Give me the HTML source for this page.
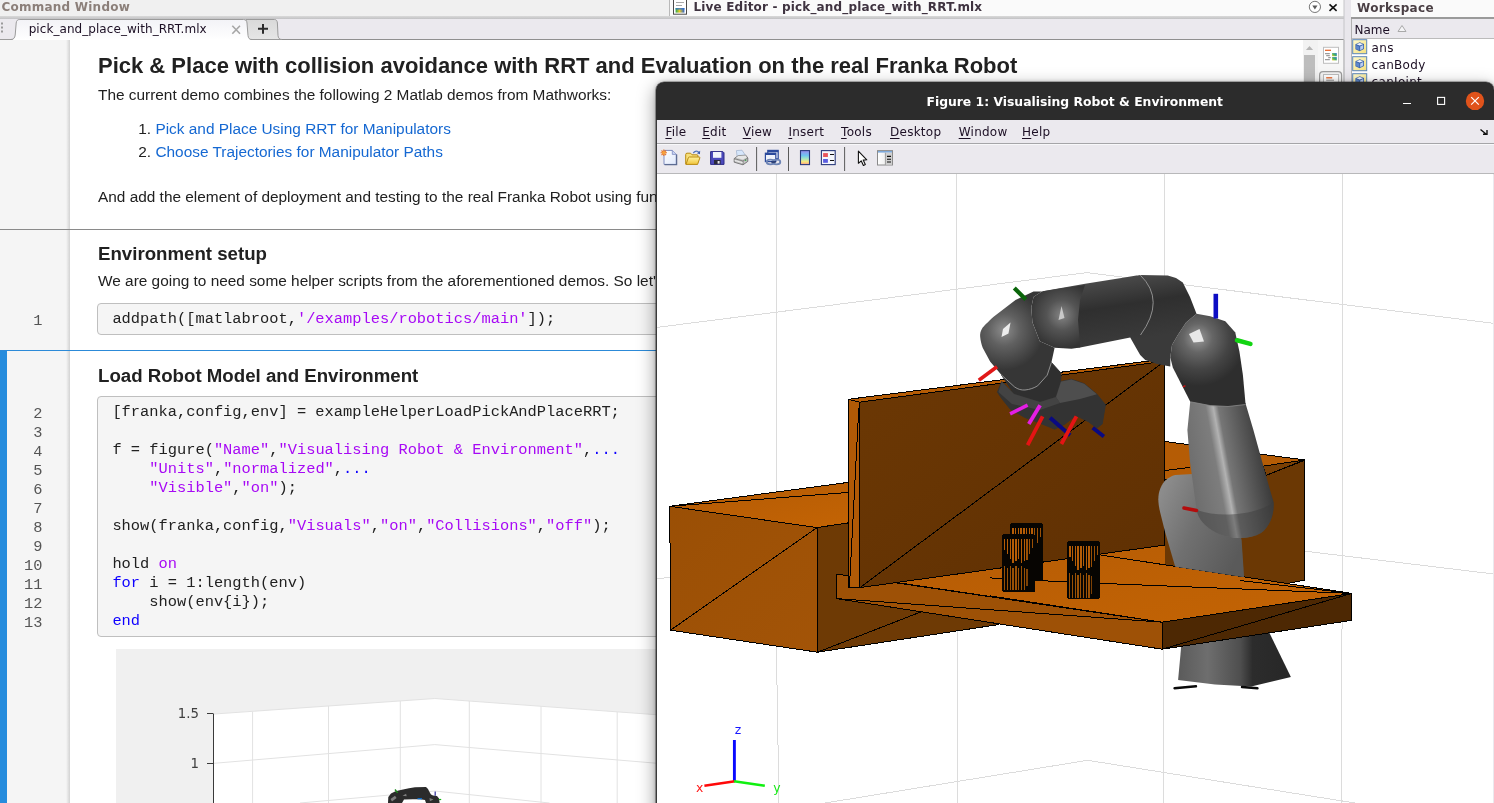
<!DOCTYPE html>
<html lang="en">
<head>
<meta charset="utf-8">
<title>Live Editor - pick_and_place_with_RRT.mlx</title>
<style>
*{box-sizing:border-box;margin:0;padding:0}
html,body{width:1494px;height:803px;overflow:hidden;background:#fff}
body{position:relative;font-family:"DejaVu Sans","Liberation Sans",sans-serif;font-size:13px;color:#000}
.abs{position:absolute}
.ui{font-family:"DejaVu Sans","Liberation Sans",sans-serif}
.doc{font-family:"Liberation Sans",sans-serif;color:#212121}
.mono{font-family:"Liberation Mono",monospace}
/* top strips */
#strip{left:0;top:0;width:1494px;height:17px;background:linear-gradient(#f7f7f7,#f1f1f1)}
#stripline{left:0;top:17px;width:1494px;height:2px;background:#cfcfcf}
#cmdtitle{left:1.5px;top:0px;font-weight:bold;font-size:12px;line-height:15px;color:#8b7f79;white-space:nowrap;letter-spacing:.23px}
#letitle{left:693.5px;top:0px;font-weight:bold;font-size:12px;line-height:15px;color:#3f3340;white-space:nowrap;letter-spacing:.17px}
#wstitle{left:1357px;top:1px;font-weight:bold;font-size:12px;line-height:15px;color:#4a3f44;white-space:nowrap;letter-spacing:.32px}
#tabbar{left:0;top:19px;width:1345px;height:21px;background:#e9e7ec}
#tabline{left:0;top:39px;width:1345px;height:1px;background:#9c9c9c}
#tab1{left:15px;top:20px;width:233px;height:20px;background:#fff;border:1px solid #9a9a9a;border-bottom:none;border-radius:4px 4px 0 0}
#tab1 span{position:absolute;left:13px;top:0px;font-size:12.5px;color:#1a0a1a;white-space:nowrap}
#tab2{left:247px;top:20px;width:31px;height:19px;background:#ebebeb;border:1px solid #9a9a9a;border-bottom:none;border-radius:4px 4px 0 0}
/* editor */
#gutter{left:0;top:40px;width:70px;height:763px;background:#f5f5f5}
#gshadow{left:66px;top:40px;width:4px;height:763px;background:linear-gradient(90deg,rgba(0,0,0,0),rgba(0,0,0,.14))}
#page{left:70px;top:40px;width:1233px;height:763px;background:#fff}
.ln{position:absolute;left:0;width:42.5px;text-align:right;font-family:"Liberation Mono",monospace;font-size:15.33px;color:#555;line-height:19px}
h1.t{position:absolute;left:98px;font-family:"Liberation Sans",sans-serif;font-weight:bold;color:#212121;white-space:nowrap}
.p{position:absolute;left:98px;font-family:"Liberation Sans",sans-serif;font-size:15.4px;line-height:17px;color:#212121;white-space:nowrap}
.code{position:absolute;left:97px;background:#f5f5f5;border:1px solid #bfbfbf;border-radius:4px}
.cl{position:absolute;left:112.4px;font-family:"Liberation Mono",monospace;font-size:15.39px;color:#212121;white-space:pre;line-height:19px}
.s{color:#a709f5}
.k{color:#0e00ff}
a.lk{color:#1568d2;text-decoration:none}
</style>
</head>
<body>
<div id="root" style="position:absolute;left:0;top:0;width:1494px;height:803px;will-change:transform">
<!-- top strip -->
<svg class="abs" style="left:0;top:0" width="1494" height="40" viewBox="0 0 1494 40">
<defs>
<linearGradient id="gstrip" x1="0" y1="0" x2="0" y2="1"><stop offset="0" stop-color="#d9d9d9"/><stop offset="1" stop-color="#c2c2c4"/></linearGradient>
<linearGradient id="gtab1" x1="0" y1="0" x2="0" y2="1"><stop offset="0" stop-color="#f3f3f7"/><stop offset="1" stop-color="#ffffff"/></linearGradient>
<linearGradient id="gtab2" x1="0" y1="0" x2="0" y2="1"><stop offset="0" stop-color="#d9d9d9"/><stop offset="1" stop-color="#e6e6e6"/></linearGradient>
<linearGradient id="gicon" x1="0" y1="0" x2="1" y2="0"><stop offset="0" stop-color="#2aa84a"/><stop offset=".45" stop-color="#e8c82a"/><stop offset="1" stop-color="#2a62c8"/></linearGradient>
</defs>
<!-- strips -->
<rect x="0" y="0" width="669" height="16" fill="#f0f0f0"/>
<rect x="669" y="0" width="1" height="16" fill="#b9b9b9"/>
<rect x="670" y="0" width="674" height="16" fill="#fafafa"/>
<rect x="1351" y="0" width="143" height="17" fill="#fafafa"/>
<rect x="0" y="16" width="1344" height="3" fill="url(#gstrip)"/>
<rect x="0" y="19" width="1344" height="20" fill="#ebe9ee"/>
<rect x="0" y="39" width="1344" height="1" fill="#8f8f8f"/>
<!-- splitter -->
<rect x="1344" y="0" width="7" height="40" fill="#e9e7ec"/>
<rect x="1343.5" y="0" width="1" height="40" fill="#c6c6c8"/>
<!-- tab 2 -->
<path d="M246,19.5 H274.5 C276.5,19.5 277.2,21 277.4,23 L278,35.5 C278.2,38 279.5,39.5 282,39.5 H246 Z" fill="url(#gtab2)" stroke="#9b9b9b" stroke-width="1"/>
<!-- tab 1 -->
<path d="M10.5,40 C13.5,40 14.8,38 15.2,35 L16.2,23 C16.5,20.5 17.5,20 19.8,20 H243.5 C246,20 246.8,20.8 247,23 L248,35.5 C248.3,38.3 249.5,40 252,40 Z" fill="url(#gtab1)"/>
<path d="M0,39.5 H10.5 C13.5,39.5 14.8,38 15.2,35 L16.2,23 C16.5,20.5 17.5,19.5 19.8,19.5 H243.5 C246,19.5 246.8,20.8 247,23 L248,35.5 C248.3,38.3 249.5,39.5 252,39.5" fill="none" stroke="#9b9b9b" stroke-width="1"/>
<!-- grip dots -->
<g fill="#9a9a9a"><rect x="1" y="22.5" width="2" height="2"/><rect x="1" y="26.5" width="2" height="2"/><rect x="1" y="30.5" width="2" height="2"/></g>
<!-- tab close -->
<path d="M232.3,25.8 L240,33.8 M240,25.8 L232.3,33.8" stroke="#a6a6a6" stroke-width="1.6" fill="none"/>
<!-- plus -->
<path d="M258,28.8 H268 M263,24 V33.7" stroke="#2b2b2b" stroke-width="2" fill="none"/>
<!-- live editor icon -->
<rect x="673.5" y="-2" width="13" height="16.2" fill="#fff" stroke="#4a4a4a" stroke-width="1"/>
<path d="M676,2.5 H684 M676,5.5 H682" stroke="#a8a8a8" stroke-width="1"/>
<rect x="675.6" y="8" width="8.8" height="4.6" fill="url(#gicon)"/>
<rect x="675.6" y="8" width="8.8" height="1.6" fill="#2d6fd0" opacity=".75"/>
<!-- dropdown circle + close -->
<circle cx="1314.9" cy="6.9" r="5.6" fill="#fff" stroke="#777" stroke-width="1"/>
<path d="M1312.3,5.4 H1317.5 L1314.9,9.4 Z" fill="#5a5a5a"/>
<path d="M1329.5,4.3 L1336.6,10.9 M1336.6,4.3 L1329.5,10.9" stroke="#111" stroke-width="1.6" fill="none"/>
<!-- workspace header -->
<rect x="1351" y="17" width="143" height="2" fill="#9a9a9a"/>
<rect x="1351" y="19" width="143" height="19.5" fill="#ebe9ee"/>
<rect x="1351" y="38.3" width="143" height="1" fill="#a3a3a3"/>
<rect x="1351" y="19" width="1" height="21" fill="#b0b0b0"/>
<path d="M1398,31.5 L1402,25.5 L1406,31.5 Z" fill="#f4f4f6" stroke="#a9a9a9" stroke-width="1"/>
</svg>
<div class="abs ui" id="tabtxt" style="left:28.7px;top:22px;font-size:12px;line-height:15px;color:#1c0f24;white-space:nowrap;letter-spacing:.06px">pick_and_place_with_RRT.mlx</div>
<div class="abs ui" id="wsname" style="left:1354.5px;top:22.5px;font-size:12px;line-height:15px;color:#1c0f24;white-space:nowrap">Name</div>

<div class="abs ui" id="cmdtitle">Command Window</div>
<div class="abs ui" id="letitle">Live Editor - pick_and_place_with_RRT.mlx</div>
<div class="abs ui" id="wstitle">Workspace</div>
<!-- editor -->
<div class="abs" id="gutter"></div>
<div class="abs" id="page"></div>
<div class="abs" id="gshadow"></div>

<div class="abs" style="left:0;top:229px;width:1303px;height:1px;background:#8a8a8a"></div>
<div class="abs" style="left:0;top:350px;width:1303px;height:1px;background:#2c8ad8"></div>
<div class="abs" style="left:0;top:351px;width:7px;height:452px;background:#268cdd"></div>
<h1 class="t" id="h1" style="top:53px;font-size:22px;line-height:26px">Pick &amp; Place with collision avoidance with RRT and Evaluation on the real Franka Robot</h1>
<div class="p" id="p1" style="top:86px">The current demo combines the following 2 Matlab demos from Mathworks:</div>
<div class="p" id="l1" style="top:120px;left:138.3px">1. <a class="lk">Pick and Place Using RRT for Manipulators</a></div>
<div class="p" id="l2" style="top:143px;left:138.3px">2. <a class="lk">Choose Trajectories for Manipulator Paths</a></div>
<div class="p" id="p2" style="top:188px">And add the element of deployment and testing to the real Franka Robot using functions from the Franka Toolbox.</div>
<h1 class="t" id="h2" style="top:243px;font-size:18.67px;line-height:22px">Environment setup</h1>
<div class="p" id="p3" style="top:272px">We are going to need some helper scripts from the aforementioned demos. So let's add them to the path:</div>
<div class="code" style="top:303px;width:1192px;height:32px"></div>
<div class="ln" style="top:312px">1</div>
<div class="cl" id="c1" style="top:310px">addpath([matlabroot,<span class="s">'/examples/robotics/main'</span>]);</div>
<h1 class="t" id="h3" style="top:365px;font-size:18.67px;line-height:22px">Load Robot Model and Environment</h1>
<div class="code" style="top:396px;width:1192px;height:241px"></div>
<div class="ln" style="top:405px">2</div><div class="cl" id="c2" style="top:403px">[franka,config,env] = exampleHelperLoadPickAndPlaceRRT;</div>
<div class="ln" style="top:424px">3</div>
<div class="ln" style="top:443px">4</div><div class="cl" style="top:441px">f = figure(<span class="s">"Name"</span>,<span class="s">"Visualising Robot &amp; Environment"</span>,<span class="k">...</span></div>
<div class="ln" style="top:462px">5</div><div class="cl" style="top:460px">    <span class="s">"Units"</span>,<span class="s">"normalized"</span>,<span class="k">...</span></div>
<div class="ln" style="top:481px">6</div><div class="cl" style="top:479px">    <span class="s">"Visible"</span>,<span class="s">"on"</span>);</div>
<div class="ln" style="top:500px">7</div>
<div class="ln" style="top:519px">8</div><div class="cl" style="top:517px">show(franka,config,<span class="s">"Visuals"</span>,<span class="s">"on"</span>,<span class="s">"Collisions"</span>,<span class="s">"off"</span>);</div>
<div class="ln" style="top:538px">9</div>
<div class="ln" style="top:557px">10</div><div class="cl" style="top:555px">hold <span class="s">on</span></div>
<div class="ln" style="top:576px">11</div><div class="cl" style="top:574px"><span class="k">for</span> i = 1:length(env)</div>
<div class="ln" style="top:595px">12</div><div class="cl" style="top:593px">    show(env{i});</div>
<div class="ln" style="top:614px">13</div><div class="cl" style="top:612px"><span class="k">end</span></div>

<svg class="abs" style="left:116px;top:649px" width="1187" height="154" viewBox="116 649 1187 154">
<rect x="116" y="649" width="1187" height="154" fill="#f0f0f0"/>
<polygon points="213,714.1 434.8,698.5 656,714.7 900,732 900,803 213,803" fill="#fff"/>
<g stroke="#e2e2e2" stroke-width="1" fill="none">
<path d="M213,714.1 L434.8,698.5 L656,714.7 L900,732"/>
<path d="M213,763.4 L434.8,744.6 L656,763.2 L900,783"/>
<path d="M300,803 L434.8,791 L549.5,803"/>
<path d="M252.6,711.5V803M328.5,706V803M400.3,701V803M469.3,701V803M541,706.3V803M617.2,712V803"/>
</g>
<path d="M213.5,714V803M207,713.5H213.5M207,763.5H213.5" stroke="#3a3a3a" stroke-width="1" fill="none"/>
<text x="199" y="717.7" text-anchor="end" font-family="DejaVu Sans, sans-serif" font-size="13.3" fill="#404040">1.5</text>
<text x="199" y="767.6" text-anchor="end" font-family="DejaVu Sans, sans-serif" font-size="13.3" fill="#404040">1</text>
<path d="M388,803 L388.3,797 L391,793.5 L395,791.5 L398.5,790.5 L403,789.5 L409,788.3 L415,787.3 L426,787 L428,789 L429.5,792 L431,794.5 L433,795.5 L437,796 L439,798.5 L439.6,803 L426,803 L425,800 L420,799.3 L413,799.2 L404,799.6 L402,803 Z" fill="#2b2b2b"/>
<path d="M390.5,799 l4.5,-3.2 l1.6,2.2 l-4.6,3.4 z M402.5,795.8 l3.6,-2 l.6,2.4 z M429.5,798 l4,1.4 l-3.6,1.8 z" fill="#7d7d7d"/>
<path d="M395,789.5 l2.6,3.4" stroke="#1a8a1a" stroke-width="1.4"/>
<path d="M435.2,791.5 v4.2" stroke="#3a3aa0" stroke-width="1.3"/>
<path d="M417.5,798.7 h4.5" stroke="#0a6ac8" stroke-width="1.3"/>
<path d="M438.8,799.5 h2.4" stroke="#12b812" stroke-width="1.2"/>
</svg>
<!--EDITOR2-->

<div class="abs" style="left:1303px;top:40px;width:14.5px;height:763px;background:#f2f2f2"></div>
<div class="abs" style="left:1317.5px;top:40px;width:26px;height:763px;background:#f6f6f6"></div>
<div class="abs" style="left:1304px;top:55px;width:11px;height:748px;background:#bdbdbd"></div>
<div class="abs" style="left:1352px;top:39.3px;width:142px;height:764px;background:#fff"></div>
<div class="abs" style="left:1343.4px;top:40px;width:1.6px;height:763px;background:#c9c9cb"></div>
<div class="abs" style="left:1345px;top:40px;width:6.5px;height:763px;background:#ebe9ee"></div>
<div class="abs" style="left:1351.3px;top:40px;width:1px;height:763px;background:#b4b4b6"></div>
<svg class="abs" style="left:1296px;top:36px" width="198" height="60" viewBox="1296 36 198 60">
<defs><linearGradient id="gyel" x1="0" y1="0" x2="1" y2="1"><stop offset="0" stop-color="#fffbd0"/><stop offset="1" stop-color="#f3df7c"/></linearGradient>
<linearGradient id="gimg" x1="0" y1="1" x2="1" y2="0"><stop offset="0" stop-color="#f0d020"/><stop offset=".5" stop-color="#3fae6a"/><stop offset="1" stop-color="#2f6fd0"/></linearGradient></defs>
<path d="M1305.9,50.1 L1309.5,45.9 L1313.1,50.1 Z" fill="#b6b6b6"/>
<rect x="1323.5" y="47.3" width="15" height="16" fill="#fff" stroke="#bdbdbd" stroke-width="1"/>
<path d="M1325,50.3 H1331" stroke="#e8662a" stroke-width="1.3"/>
<path d="M1325,53.6 H1329.8 M1326.2,55.6 H1329.8 M1328.2,57.6 H1330.8 M1325,59.6 H1329.8" stroke="#9b9b9b" stroke-width="1.1"/>
<rect x="1332.1" y="53.1" width="4.7" height="3.1" fill="url(#gimg)"/>
<rect x="1332.1" y="57.1" width="4.7" height="3.3" fill="url(#gimg)"/>
<rect x="1319.6" y="71.6" width="22" height="26" rx="3.5" fill="#f3f3f3" stroke="#9c9c9c" stroke-width="1.2"/>
<rect x="1323.5" y="74.5" width="15" height="16" fill="#fff" stroke="#bdbdbd" stroke-width="1"/>
<path d="M1326.2,77.8 H1332.2" stroke="#e8662a" stroke-width="1.3"/>
<path d="M1326.2,80.2 H1334" stroke="#9b9b9b" stroke-width="1.1"/>
<g transform="translate(1352.2,39.2)">
<rect x="0.5" y="0.5" width="14" height="14" fill="url(#gyel)" stroke="#5b86b8" stroke-width="1"/>
<path d="M3.2,5 L7.6,3 L11.8,4.8 L11.8,9.8 L7.4,12 L3.2,10 Z" fill="#3d67ad"/>
<path d="M4.2,5.1 L7.6,3.8 L10.8,5 L7.5,6.4 Z" fill="#f4f7fc"/>
<path d="M8,7.2 L11,5.8 L11,9.4 L8,11 Z" fill="#b9cdf0"/>
<path d="M3.9,6 L7,7.3 L7,11 L3.9,9.6 Z" fill="#5f88cc"/>
</g><g transform="translate(1352.2,56.2)">
<rect x="0.5" y="0.5" width="14" height="14" fill="url(#gyel)" stroke="#5b86b8" stroke-width="1"/>
<path d="M3.2,5 L7.6,3 L11.8,4.8 L11.8,9.8 L7.4,12 L3.2,10 Z" fill="#3d67ad"/>
<path d="M4.2,5.1 L7.6,3.8 L10.8,5 L7.5,6.4 Z" fill="#f4f7fc"/>
<path d="M8,7.2 L11,5.8 L11,9.4 L8,11 Z" fill="#b9cdf0"/>
<path d="M3.9,6 L7,7.3 L7,11 L3.9,9.6 Z" fill="#5f88cc"/>
</g><g transform="translate(1352.2,73.2)">
<rect x="0.5" y="0.5" width="14" height="14" fill="url(#gyel)" stroke="#5b86b8" stroke-width="1"/>
<path d="M3.2,5 L7.6,3 L11.8,4.8 L11.8,9.8 L7.4,12 L3.2,10 Z" fill="#3d67ad"/>
<path d="M4.2,5.1 L7.6,3.8 L10.8,5 L7.5,6.4 Z" fill="#f4f7fc"/>
<path d="M8,7.2 L11,5.8 L11,9.4 L8,11 Z" fill="#b9cdf0"/>
<path d="M3.9,6 L7,7.3 L7,11 L3.9,9.6 Z" fill="#5f88cc"/>
</g>
</svg>
<div class="abs ui" id="ws1" style="left:1371.6px;top:41px;letter-spacing:.3px;font-size:12px;line-height:15px;color:#1c0f24;white-space:nowrap">ans</div>
<div class="abs ui" id="ws2" style="left:1371.6px;top:58px;letter-spacing:.3px;font-size:12px;line-height:15px;color:#1c0f24;white-space:nowrap">canBody</div>
<div class="abs ui" id="ws3" style="left:1371.6px;top:75px;letter-spacing:.3px;font-size:12px;line-height:15px;color:#1c0f24;white-space:nowrap">canJoint</div>
<!--WORKSPACE2-->

<style>
#figwin{left:656px;top:82px;width:837.5px;height:730px;background:#ebe9ee;border-radius:8px 8px 0 0;box-shadow:0 0 0 .6px rgba(30,30,30,.55),0 6px 17px 2px rgba(0,0,0,.34),0 0 4px rgba(0,0,0,.25);overflow:hidden}
#figtb{left:0;top:0;width:100%;height:38px;background:#2c2c2c}
#figtitle{left:0;width:100%;top:13px;text-align:center;color:#fff;font-weight:bold;font-size:12.36px;line-height:15px;white-space:nowrap}
.mi{top:43px;letter-spacing:.25px;font-size:12px;line-height:15px;color:#1c0f24;white-space:nowrap}
.mi u{text-decoration:underline;text-underline-offset:1.5px;text-decoration-thickness:1px}
</style>
<div class="abs" id="figwin">
<div class="abs" id="figtb"></div>
<div class="abs ui" id="figtitle"><span id="ftt">Figure 1: Visualising Robot &amp; Environment</span></div>
<svg class="abs" style="left:730px;top:5px" width="108" height="30" viewBox="1386 87 108 30">
<path d="M1403,103.5 H1411" stroke="#fff" stroke-width="1.1"/>
<rect x="1437.6" y="97.4" width="7" height="7" fill="none" stroke="#fff" stroke-width="1.1"/>
<circle cx="1475" cy="100.9" r="9.2" fill="#e0531b"/>
<path d="M1471.2,97.1 L1478.8,104.7 M1478.8,97.1 L1471.2,104.7" stroke="#fff" stroke-width="1.2"/>
</svg>
<div class="abs ui mi" style="left:9.399999999999977px"><u>F</u>ile</div><div class="abs ui mi" style="left:46.200000000000045px"><u>E</u>dit</div><div class="abs ui mi" style="left:86.70000000000005px"><u>V</u>iew</div><div class="abs ui mi" style="left:132.39999999999998px"><u>I</u>nsert</div><div class="abs ui mi" style="left:185.10000000000002px"><u>T</u>ools</div><div class="abs ui mi" style="left:234px"><u>D</u>esktop</div><div class="abs ui mi" style="left:302.70000000000005px"><u>W</u>indow</div><div class="abs ui mi" style="left:366px"><u>H</u>elp</div>
<div class="abs" style="left:0;top:61px;width:100%;height:1px;background:#a5a5a8"></div>
<div class="abs" style="left:0;top:62px;width:100%;height:1px;background:#f8f8fa"></div>
<div class="abs" style="left:0;top:90.5px;width:100%;height:1px;background:#b8b8ba"></div>
<div class="abs" style="left:0;top:91.5px;width:100%;height:1px;background:#e4e4e6"></div>
<svg class="abs" style="left:822px;top:45px" width="12" height="10" viewBox="1478 127 12 10"><path d="M1480.5,129.5 L1486,134 M1483,134.2 H1487 V130" stroke="#111" stroke-width="1.4" fill="none"/></svg>
<svg class="abs" style="left:0;top:62px" width="838" height="30" viewBox="656 144 838 30">
<defs>
<linearGradient id="gpage" x1="0" y1="0" x2="1" y2="1"><stop offset="0" stop-color="#ffffff"/><stop offset="1" stop-color="#dfe8fb"/></linearGradient>
<linearGradient id="gfold" x1="0" y1="0" x2="0" y2="1"><stop offset="0" stop-color="#fff3a0"/><stop offset="1" stop-color="#f0c43a"/></linearGradient>
<linearGradient id="gcb" x1="0" y1="0" x2="0" y2="1"><stop offset="0" stop-color="#9a8cf0"/><stop offset=".35" stop-color="#6fc6f0"/><stop offset=".6" stop-color="#a9e8c0"/><stop offset=".8" stop-color="#fbe87a"/><stop offset="1" stop-color="#f59a8a"/></linearGradient>
<linearGradient id="gpane" x1="0" y1="0" x2="1" y2="0"><stop offset="0" stop-color="#ffffff"/><stop offset="1" stop-color="#e2e2e2"/></linearGradient>
</defs>
<!-- new -->
<path d="M664,150.4 H672.3 L676.3,154.4 V164.4 H664 Z" fill="url(#gpage)" stroke="#7f8cc0" stroke-width="1"/>
<path d="M672.3,150.4 V154.4 H676.3" fill="#c9d5f4" stroke="#7f8cc0" stroke-width=".8"/>
<path d="M664.6,164.7 H676.6 V154.6" fill="none" stroke="#5d6c92" stroke-width="1.3"/>
<path d="M663.8,149.6 V156 M660.6,152.8 H667 M661.5,150.5 L666.1,155.1 M666.1,150.5 L661.5,155.1" stroke="#e8742a" stroke-width="1.1"/>
<circle cx="663.8" cy="152.8" r="1.7" fill="#f7a23a"/>
<!-- open -->
<path d="M685.7,164.3 V154.6 Q685.7,153.2 687,153.2 H690.6 L692,154.8 H697 Q698,154.8 698,156 V157.2" fill="#f7df7a" stroke="#b98a12" stroke-width="1"/>
<path d="M686,164.4 L688.3,157.8 Q688.6,157 689.5,157 H699.2 Q700.2,157 699.8,158 L697.6,164.4 Z" fill="url(#gfold)" stroke="#b98a12" stroke-width="1"/>
<path d="M693.2,153 Q696.5,149.5 699.3,152.8" fill="none" stroke="#5577bb" stroke-width="1.2"/>
<path d="M700.2,150.8 L699.9,154.3 L696.9,153.2 Z" fill="#3d5fae"/>
<!-- save -->
<path d="M710.6,151.6 H722.8 L724,152.8 V164.4 H710.6 Z" fill="#4b49bb" stroke="#2f2d86" stroke-width="1"/>
<rect x="713" y="152" width="8.4" height="5.8" fill="#f2f4fb"/>
<rect x="714" y="160" width="6.6" height="4.2" fill="#2a2a3a"/>
<rect x="717.6" y="161" width="2" height="2.6" fill="#e8e8f0"/>
<!-- print -->
<path d="M737.2,157.2 L736.4,150.6 L742,150.2 L745.6,155.6 Z" fill="#d6e6fb" stroke="#9fb0cc" stroke-width=".7"/>
<path d="M734.2,158.6 L738.4,155.6 L745.8,155.2 L747.8,158 L747.8,161.4 L743,164.8 L734.2,162.2 Z" fill="#c4c4c4" stroke="#6e6e6e" stroke-width=".9"/>
<path d="M734.2,158.6 L743,161 L747.8,158 M743,161 V164.8" fill="none" stroke="#7a7a7a" stroke-width=".9"/>
<path d="M734.6,160.4 L742.8,162.8" stroke="#f2f2f2" stroke-width=".9"/>
<path d="M738.4,155.8 L745.6,155.4 L746.8,157.4 L742.8,159.6 L736,157.8 Z" fill="#e6e6e6"/>
<circle cx="745.6" cy="160.2" r=".8" fill="#3aa84a"/>
<rect x="756.1" y="147" width="1" height="24" fill="#5a5a5a"/>
<!-- link -->
<rect x="767.8" y="150.4" width="10.4" height="8.4" fill="#e8edf8" stroke="#2b4a9c" stroke-width="1.2"/>
<rect x="767.8" y="150.2" width="10.4" height="2" fill="#2b4a9c"/>
<rect x="765.4" y="153.2" width="10.4" height="8.4" fill="#eef2fb" stroke="#2b4a9c" stroke-width="1.2"/>
<rect x="765.4" y="153" width="10.4" height="2" fill="#2b4a9c"/>
<ellipse cx="770.4" cy="162" rx="3.7" ry="2.3" fill="none" stroke="#6d84b4" stroke-width="1.8"/>
<ellipse cx="776.6" cy="162" rx="3.7" ry="2.3" fill="none" stroke="#6d84b4" stroke-width="1.8"/>
<path d="M771.3,162 H775.8" stroke="#1c2f66" stroke-width="1.5"/>
<rect x="788" y="147" width="1" height="24" fill="#5a5a5a"/>
<!-- colorbar -->
<rect x="800.5" y="150.6" width="9" height="14" fill="url(#gcb)" stroke="#2b3b7c" stroke-width="1.1"/>
<!-- legend -->
<rect x="821.4" y="150.6" width="13.8" height="14" fill="#f4f6fc" stroke="#2b3b7c" stroke-width="1.1"/>
<rect x="823.1" y="153.1" width="4.8" height="3.9" fill="#e8555c"/>
<rect x="823.1" y="159" width="4.8" height="3.8" fill="#5a5ce0"/>
<path d="M830,154.5 H834 M830,160.5 H834" stroke="#111" stroke-width="1.2"/>
<rect x="844.1" y="147" width="1" height="24" fill="#5a5a5a"/>
<!-- cursor -->
<path d="M858.4,151.2 V163.3 L861.2,160.8 L863.4,165.5 L865.3,164.6 L863.2,160.1 L866.8,159.8 Z" fill="#fff" stroke="#111" stroke-width="1.1" stroke-linejoin="round"/>
<!-- panel -->
<rect x="877.5" y="150.6" width="15" height="14.4" fill="url(#gpane)" stroke="#8a8a8a" stroke-width="1"/>
<rect x="878" y="151" width="14" height="1.6" fill="#7ea9da"/>
<rect x="885.6" y="152.8" width="6.4" height="11.8" fill="#cfcfcf"/>
<path d="M885.4,152.8 V164.8" stroke="#8a8a8a" stroke-width=".8"/>
<path d="M887,156.4 H891 M887,159.2 H891 M887,162 H891" stroke="#111" stroke-width="1.1"/>
</svg>

<div class="abs" style="left:1px;top:92px;width:836px;height:640px;background:#fff"></div>
<svg class="abs" style="left:1px;top:92px" width="836" height="629" viewBox="657 174 836 629" shape-rendering="crispEdges">
<defs>
<linearGradient id="gLx" x1="0" y1="0" x2="1" y2="1"><stop offset="0" stop-color="#9a4f05"/><stop offset="1" stop-color="#a35407"/></linearGradient>
<linearGradient id="gTop" x1="0" y1="0" x2="1" y2="1"><stop offset="0" stop-color="#b25a05"/><stop offset="1" stop-color="#c46404"/></linearGradient>
<linearGradient id="gPanel" x1="0" y1="0" x2="1" y2="1"><stop offset="0" stop-color="#6c3804"/><stop offset="1" stop-color="#5f3003"/></linearGradient>
<linearGradient id="gLink" gradientUnits="userSpaceOnUse" x1="1190" y1="470" x2="1272" y2="455"><stop offset="0" stop-color="#6e6e6e"/><stop offset=".32" stop-color="#7d7d7d"/><stop offset=".41" stop-color="#b2b2b2"/><stop offset=".47" stop-color="#767676"/><stop offset=".72" stop-color="#545454"/><stop offset="1" stop-color="#2f2f2f"/></linearGradient>
<linearGradient id="gBase" gradientUnits="userSpaceOnUse" x1="1180" y1="660" x2="1290" y2="660"><stop offset="0" stop-color="#5c5c5c"/><stop offset=".25" stop-color="#6e6e6e"/><stop offset=".55" stop-color="#4e4e4e"/><stop offset=".66" stop-color="#2c2c2c"/><stop offset="1" stop-color="#272727"/></linearGradient>
<linearGradient id="gShoulder" gradientUnits="userSpaceOnUse" x1="1158" y1="500" x2="1245" y2="540"><stop offset="0" stop-color="#8c8c8c"/><stop offset=".45" stop-color="#707070"/><stop offset="1" stop-color="#5a5a5a"/></linearGradient>
<linearGradient id="gFore" gradientUnits="userSpaceOnUse" x1="1090" y1="280" x2="1100" y2="345"><stop offset="0" stop-color="#4c4c4c"/><stop offset=".45" stop-color="#2f2f2f"/><stop offset="1" stop-color="#3a3a3a"/></linearGradient>
<radialGradient id="gWr" gradientUnits="userSpaceOnUse" cx="1004" cy="330" r="40"><stop offset="0" stop-color="#8c8c8c"/><stop offset=".4" stop-color="#606060"/><stop offset="1" stop-color="#363636"/></radialGradient>
<radialGradient id="gWr2" gradientUnits="userSpaceOnUse" cx="1062" cy="315" r="34"><stop offset="0" stop-color="#858585"/><stop offset=".45" stop-color="#545454"/><stop offset="1" stop-color="#333"/></radialGradient>
<radialGradient id="gEl" gradientUnits="userSpaceOnUse" cx="1198" cy="338" r="48"><stop offset="0" stop-color="#9a9a9a"/><stop offset=".3" stop-color="#666"/><stop offset=".65" stop-color="#444"/><stop offset="1" stop-color="#2e2e2e"/></radialGradient>
</defs>
<!-- grid -->
<g stroke="#dcdcdc" stroke-width="1" fill="none">
<path d="M776.5,174L776.9,678L779,803M956.4,174L957.6,803M1164.4,174L1163.4,803M1342.6,174L1341.8,803"/>
<path d="M656,327.5L1087,272.6L1494,323.4"/>
<path d="M656,579L1088,525L1494,574"/>
<path d="M825,803L1087.6,760.3L1355,803"/>
</g>
<!-- left box -->
<g stroke="#000" stroke-width="1" stroke-linejoin="round">
<polygon points="669.8,506.3 817,527.6 860,522.5 860,480.8" fill="url(#gTop)"/>
<path d="M669.8,506.3L860,491.5" fill="none"/>
<polygon points="817,527.6 817.5,652.2 998.3,624.6 1000,500" fill="#6e3a05"/>
<path d="M817.5,652.2L921.2,611.8" fill="none"/>
<polygon points="669.8,506.3 817,527.6 817.5,652.2 670.5,630.2" fill="url(#gLx)"/>
<path d="M670.5,630.2L817,527.6" fill="none"/>
</g>
<!-- right box -->
<g stroke="#000" stroke-width="1" stroke-linejoin="round">
<polygon points="1164.7,441.5 1304.4,459.9 1265.8,475.5 1164.7,480" fill="#b55c05"/>
<polygon points="1304.4,460 1263.3,466.1 1265.8,475.5" fill="#7a4005"/>
<path d="M1164.7,470.5L1190,467.4" fill="none"/>
<polygon points="1164.7,480 1265.8,475.5 1304.4,460.3 1304.6,580.2 1286.8,583.6 1164.7,565" fill="#6b3804"/>
</g>
<g shape-rendering="auto">
<polygon points="1181.8,640 1268,630 1290.9,677.1 1251.2,686.5 1215,684.5 1178.1,680" fill="url(#gBase)"/>
<path d="M1174.5,688.2 L1196,686.3 M1242,687 L1257.5,688.3" stroke="#0a0a0a" stroke-width="2.4" stroke-linecap="round"/>
</g>

<g stroke="#000" stroke-width="1" stroke-linejoin="round">
<polygon points="860,587.6 870,510 1164.7,510 1164.7,564.8 1351.8,593.4 1162.2,622.2 901.9,583.3" fill="url(#gTop)" stroke="none"/>
<path d="M1100,554.9L1351.8,593.4L1162.2,622.2L901.9,583.3" fill="none"/>
<path d="M861,587.2L1162.2,622.2M990,577.9L1067,582M1067,582L1351.8,593.4M990,595.9L1162.2,622.2M1240,580.5L1351.8,593.4" fill="none"/>
<polygon points="836.4,574 1162.2,622.2 1162.2,649.2 836.4,598.6" fill="#9e5106"/>
<path d="M836.4,598.6L1162.2,622.2" fill="none"/>
<polygon points="1162.2,622.2 1351.8,593.4 1351.8,620.3 1162.2,649.2" fill="#4d2803"/>
<path d="M1162.2,649.2L1351.8,593.4" fill="none"/>
</g>

<g stroke="#000" stroke-width="1" stroke-linejoin="round">
<polygon points="848.4,399.3 859.6,402.2 1164.6,361.2 1164.6,359" fill="#b55c05"/>
<polygon points="848.4,399.3 859.6,402.2 860,587.6 848.7,587.6" fill="#b05a06"/>
<path d="M858.8,408L849.4,587.6" fill="none"/>
<polygon points="859.6,402.2 1164.6,361.2 1164.7,545.1 860,587.6" fill="url(#gPanel)"/>
<path d="M860,587.6L1164.6,361.2" fill="none"/>
</g>

<g shape-rendering="auto">
<path d="M1192.7,474 L1175.2,475 C1168,477 1163.5,481 1160.5,488 C1157.5,495 1157.8,503 1160.2,512.6 L1165.2,532.6 L1175.2,566.7 L1244.1,577.3 L1241.6,540.1 L1230,490 Z" fill="url(#gShoulder)"/>
</g>
<g shape-rendering="crispEdges"><g><rect x="1010.2" y="523.1" width="32.7" height="57.9" rx="2.5" fill="#070502"/><rect x="1012.1" y="527.6" width="1.4" height="11.6" fill="#b55c06"/><rect x="1012.2" y="554.4" width="1.3" height="24.8" fill="#985005"/><rect x="1014.9" y="527.6" width="1.4" height="15.4" fill="#b55c06"/><rect x="1014.9" y="556.9" width="1.3" height="22.3" fill="#985005"/><rect x="1017.6" y="527.6" width="1.4" height="20.3" fill="#b55c06"/><rect x="1017.7" y="554.4" width="1.3" height="24.8" fill="#985005"/><rect x="1020.4" y="527.6" width="1.4" height="24.3" fill="#b55c06"/><rect x="1020.4" y="556.9" width="1.3" height="22.3" fill="#985005"/><rect x="1023.1" y="527.6" width="1.4" height="22.3" fill="#b55c06"/><rect x="1023.2" y="554.4" width="1.3" height="24.8" fill="#985005"/><rect x="1025.9" y="527.6" width="1.4" height="20.3" fill="#b55c06"/><rect x="1025.9" y="556.9" width="1.3" height="22.3" fill="#985005"/><rect x="1028.6" y="527.6" width="1.4" height="24.3" fill="#b55c06"/><rect x="1028.7" y="554.4" width="1.3" height="24.8" fill="#985005"/><rect x="1031.4" y="527.6" width="1.4" height="22.3" fill="#b55c06"/><rect x="1031.4" y="556.9" width="1.3" height="22.3" fill="#985005"/><rect x="1034.3" y="527.6" width="1.1" height="20.8" fill="#9a4f05"/><rect x="1034.3" y="557.8" width="1.1" height="17.4" fill="#7d4105"/><rect x="1037.0" y="527.6" width="1.1" height="15.1" fill="#9a4f05"/><rect x="1039.8" y="527.6" width="1.1" height="9.3" fill="#9a4f05"/></g><g><rect x="1002.1" y="534.3" width="33.0" height="57.9" rx="2.5" fill="#070502"/><rect x="1004.0" y="538.8" width="1.4" height="11.6" fill="#b55c06"/><rect x="1004.1" y="565.6" width="1.3" height="24.8" fill="#985005"/><rect x="1006.8" y="538.8" width="1.4" height="15.4" fill="#b55c06"/><rect x="1006.8" y="568.1" width="1.3" height="22.3" fill="#985005"/><rect x="1009.6" y="538.8" width="1.4" height="20.3" fill="#b55c06"/><rect x="1009.6" y="565.6" width="1.3" height="24.8" fill="#985005"/><rect x="1012.3" y="538.8" width="1.4" height="24.3" fill="#b55c06"/><rect x="1012.4" y="568.1" width="1.3" height="22.3" fill="#985005"/><rect x="1015.1" y="538.8" width="1.4" height="22.3" fill="#b55c06"/><rect x="1015.2" y="565.6" width="1.3" height="24.8" fill="#985005"/><rect x="1017.9" y="538.8" width="1.4" height="20.3" fill="#b55c06"/><rect x="1018.0" y="568.1" width="1.3" height="22.3" fill="#985005"/><rect x="1020.7" y="538.8" width="1.4" height="24.3" fill="#b55c06"/><rect x="1020.7" y="565.6" width="1.3" height="24.8" fill="#985005"/><rect x="1023.5" y="538.8" width="1.4" height="22.3" fill="#b55c06"/><rect x="1023.5" y="568.1" width="1.3" height="22.3" fill="#985005"/><rect x="1026.4" y="538.8" width="1.1" height="20.8" fill="#9a4f05"/><rect x="1026.4" y="569.0" width="1.1" height="17.4" fill="#7d4105"/><rect x="1029.2" y="538.8" width="1.1" height="15.1" fill="#9a4f05"/><rect x="1032.0" y="538.8" width="1.1" height="9.3" fill="#9a4f05"/></g><g><rect x="1067.2" y="541.1" width="32.6" height="58.3" rx="2.5" fill="#070502"/><rect x="1069.1" y="545.6" width="1.4" height="11.7" fill="#b55c06"/><rect x="1069.1" y="572.6" width="1.3" height="25.0" fill="#985005"/><rect x="1071.8" y="545.6" width="1.4" height="15.5" fill="#b55c06"/><rect x="1071.9" y="575.1" width="1.3" height="22.5" fill="#985005"/><rect x="1074.6" y="545.6" width="1.4" height="20.5" fill="#b55c06"/><rect x="1074.6" y="572.6" width="1.3" height="25.0" fill="#985005"/><rect x="1077.3" y="545.6" width="1.4" height="24.5" fill="#b55c06"/><rect x="1077.4" y="575.1" width="1.3" height="22.5" fill="#985005"/><rect x="1080.1" y="545.6" width="1.4" height="22.5" fill="#b55c06"/><rect x="1080.1" y="572.6" width="1.3" height="25.0" fill="#985005"/><rect x="1082.8" y="545.6" width="1.4" height="20.5" fill="#b55c06"/><rect x="1082.8" y="575.1" width="1.3" height="22.5" fill="#985005"/><rect x="1085.5" y="545.6" width="1.4" height="24.5" fill="#b55c06"/><rect x="1085.6" y="572.6" width="1.3" height="25.0" fill="#985005"/><rect x="1088.3" y="545.6" width="1.4" height="22.5" fill="#b55c06"/><rect x="1088.3" y="575.1" width="1.3" height="22.5" fill="#985005"/><rect x="1091.2" y="545.6" width="1.1" height="21.0" fill="#9a4f05"/><rect x="1091.2" y="576.1" width="1.1" height="17.5" fill="#7d4105"/><rect x="1093.9" y="545.6" width="1.1" height="15.2" fill="#9a4f05"/><rect x="1096.6" y="545.6" width="1.1" height="9.3" fill="#9a4f05"/></g></g>

<g shape-rendering="auto">
<!-- lower link -->
<path d="M1190.3,401 L1187.4,430 L1189.9,461.1 L1196.6,510 C1198,519 1206,528 1217.8,533.5 C1232,539.5 1250,539.5 1261,533 C1270,527 1274.5,514 1273.6,502 L1269.6,488.5 L1259.6,452.4 L1253.4,430 L1245.4,403 Z" fill="url(#gLink)"/>
<path d="M1196.6,510 C1198,519 1206,528 1217.8,533.5 C1232,539.5 1250,539.5 1261,533 C1270,527 1274.5,514 1273.6,502 C1262,512 1225,520 1196.6,510 Z" fill="#3c3c3c" opacity=".45"/>
<!-- elbow -->
<path d="M1196.5,313.8 L1210.3,316.3 L1225.3,321.3 L1235.3,332.6 L1239.5,352 L1242.9,375.1 L1245.6,404.5 L1228,406.5 L1210.3,405.6 L1190.3,401.8 L1172.8,367.6 L1170.3,357.6 L1172,345 L1177.8,335.1 L1186,322.5 Z" fill="url(#gEl)"/>
<path d="M1189,334 L1199.5,329 L1204,341.5 L1193.5,342.5 Z" fill="#e8e8e8"/>
<path d="M1190.3,401.8 L1210.3,405.6 L1228,406.5 L1245.6,404.5" fill="none" stroke="#8a8a8a" stroke-width=".8"/>
<!-- forearm -->
<path d="M1042.6,291.3 L1085.2,283.8 L1140.2,275 L1167.8,275.5 L1176,278 L1182.8,282.5 L1190,297 L1196.5,313.8 L1186,322.5 L1177.8,335.1 L1172,345 L1170.3,357.6 L1170.3,366.4 L1157,364 L1145.2,360.1 L1140.2,355.1 L1130.2,337.6 L1080.2,347.6 L1055.1,346.4 Z" fill="url(#gFore)"/>
<path d="M1140.2,275 Q1166,300 1140.5,335" fill="none" stroke="#9a9a9a" stroke-width=".9"/>
<!-- forearm left bulge -->
<path d="M1041.9,291.6 L1060,288.5 L1085,285 L1080,300 L1078,320 L1080.2,347.6 L1071.5,348.8 L1054.6,347.7 L1039.8,341.3 L1032.4,322.3 L1031.3,307.5 L1033.5,296.9 Z" fill="url(#gWr2)"/>
<path d="M1061.5,306 L1064.5,318 L1058.5,320 Z" fill="#c8c8c8"/>
<!-- ring -->
<path d="M1051.4,362.5 L1061,373.1 L1060.5,385 L1056,397 L1040,402 L1014,394 L1001.7,375.2 Z" fill="#2f2f2f" stroke="#2f2f2f" stroke-width="1"/>
<!-- hand -->
<path d="M1001.7,381.5 L997.5,392.1 L1001.7,398.5 L1010.2,409 L1025,417.5 L1041.9,423.9 L1054.6,429.1 L1065.2,423.9 L1075.8,415.4 L1088.5,421.7 L1096.9,428.1 L1102.2,423.9 L1105.4,404.8 L1096.9,394.2 L1084.2,383.7 L1071.5,379.4 L1061,381.5 L1056,397 L1040,402 L1014,394 Z" fill="#333" stroke="#333" stroke-width="1"/>
<path d="M1061,381.5 L1071.5,379.4 L1084.2,383.7 L1096.9,394.2 L1080,399 L1060,403 L1056,397 Z" fill="#555" opacity=".8"/>
<path d="M1001.7,381.5 L1014,394 L1040,402 L1056,397 L1060,403 L1040,410 L1012,404 L998.5,392 Z" fill="#4a4a4a" opacity=".7"/>
<!-- wrist housing -->
<path d="M1033.5,291.6 L1015.5,300.1 L993.3,317 C988,322 984,326 982.7,327.6 C980.5,331 979.8,334 980.2,337.1 C980.5,341 981.5,344.5 982.7,347.7 L990.1,361.4 L1001.7,375.2 L1014.4,386.8 C1018,389.5 1021.5,390.2 1025,390 C1030,389.5 1034,388 1037.7,385.8 L1047.2,375.2 L1051.4,362.5 L1054.6,347.7 L1039.8,341.3 L1032.4,322.3 L1031.3,307.5 L1033.5,296.9 L1041.9,291.6 Z" fill="url(#gWr)"/>
<path d="M1003,329 L1010.5,322.5 L1008.5,333.5 L1001.5,337 Z" fill="#ececec"/>
<path d="M1001.7,375.2 L1014.4,386.8 C1018,389.5 1021.5,390.2 1025,390 C1030,389.5 1034,388 1037.7,385.8 L1047.2,375.2 L1051.4,362.5" fill="none" stroke="#a8a8a8" stroke-width=".8"/>
</g>

<g shape-rendering="auto" stroke-linecap="butt" fill="none">
<path d="M1014.3,288 L1025.8,299.5" stroke="#0a650a" stroke-width="4.2"/>
<path d="M978.8,380.2 L997,366.8" stroke="#e01818" stroke-width="3.6"/>
<path d="M1215.8,293.8 V318.5" stroke="#0d0dc4" stroke-width="4.6"/>
<path d="M1237,340.3 L1250.4,343.9" stroke="#12d412" stroke-width="4.6" stroke-linecap="round"/>
<path d="M1010.1,413.9 L1027.6,405.2" stroke="#e41ee4" stroke-width="3.6"/>
<path d="M1028.8,424 L1040.1,405.2" stroke="#e41ee4" stroke-width="3.8"/>
<path d="M1050.1,417.7 L1070.1,435.2" stroke="#0a0a82" stroke-width="4"/>
<path d="M1092.7,427.7 L1103.9,436.5" stroke="#0a0a82" stroke-width="4"/>
<path d="M1027.6,445.2 L1042.6,416.4" stroke="#e41414" stroke-width="3.8"/>
<path d="M1061.4,444 L1076.4,416.4" stroke="#e41414" stroke-width="3.8"/>
<path d="M1184,508 L1196.5,510.5" stroke="#b40c0c" stroke-width="3.6" stroke-linecap="round"/>
<path d="M1183,386.8 l2.4,-1.2" stroke="#d01010" stroke-width="1.4"/>
</g>

<!-- triad -->
<g shape-rendering="auto">
<path d="M734.4,782V740" stroke="#0a0aff" stroke-width="2.9"/>
<path d="M735,781.2L704.4,785.7" stroke="#ff0808" stroke-width="2.6"/>
<path d="M734,781.2L764.8,785.7" stroke="#10f010" stroke-width="2.6"/>
<text x="734.8" y="733.8" font-family="DejaVu Sans, sans-serif" font-size="12.4" fill="#1818ff">z</text>
<text x="696.1" y="791.8" font-family="DejaVu Sans, sans-serif" font-size="12.4" fill="#ff1818">x</text>
<text x="773.2" y="791.8" font-family="DejaVu Sans, sans-serif" font-size="12.4" fill="#18e818">y</text>
</g>
</svg>

<div class="abs" style="left:0;top:38px;width:1px;height:700px;background:#3a3a3a"></div>
</div>

</div>
</body>
</html>
